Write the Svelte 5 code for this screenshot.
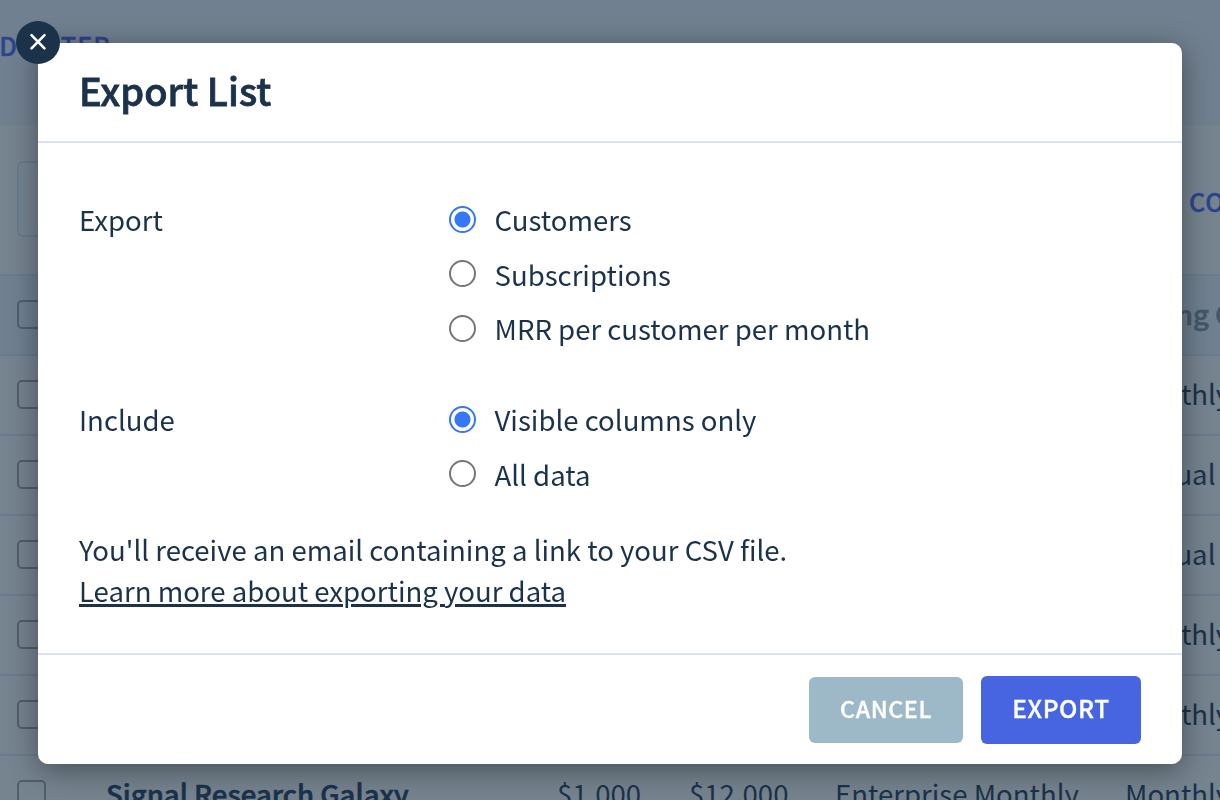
<script lang="ts">
  type Option = { value: string; label: string };

  const exportOptions: Option[] = [
    { value: 'customers', label: 'Customers' },
    { value: 'subscriptions', label: 'Subscriptions' },
    { value: 'mrr', label: 'MRR per customer per month' },
  ];

  const includeOptions: Option[] = [
    { value: 'visible', label: 'Visible columns only' },
    { value: 'all', label: 'All data' },
  ];

  const rows = [
    { billing: 'Monthly' },
    { billing: 'Annual' },
    { billing: 'Annual' },
    { billing: 'Monthly' },
    { billing: 'Monthly' },
    { name: 'Signal Research Galaxy', mrr: '$1,000', arr: '$12,000', plan: 'Enterprise Monthly', billing: 'Monthly' },
  ];

  let exportType = $state('customers');
  let include = $state('visible');
  let open = $state(true);

  function close() {
    open = false;
  }
</script>

<div class="page">
  <div class="page-header"><span class="filter-link">ADD FILTER</span></div>
  <div class="toolbar">
    <div class="search"></div>
    <span class="columns-link">COLUMNS</span>
  </div>
  <div class="row row-head">
    <span class="checkbox"></span>
    <span></span>
    <span></span>
    <span></span>
    <span></span>
    <span class="billing">Billing Cycle</span>
  </div>
  {#each rows as row}
    <div class="row">
      <span class="checkbox"></span>
      <span class="name">{row.name ?? ''}</span>
      <span>{row.mrr ?? ''}</span>
      <span>{row.arr ?? ''}</span>
      <span>{row.plan ?? ''}</span>
      <span class="billing">{row.billing}</span>
    </div>
  {/each}
</div>

{#if open}
  <div class="backdrop">
    <div class="modal" role="dialog" aria-modal="true" aria-labelledby="export-title">
      <button class="close" aria-label="Close" onclick={close}>
        <svg width="44" height="44" viewBox="0 0 44 44" fill="none" stroke="#fff" stroke-width="2.6" stroke-linecap="round">
          <path d="M15.5 14.2 28.5 27.4M28.5 14.2 15.5 27.4" />
        </svg>
      </button>

      <header class="modal-header">
        <h1 id="export-title">Export List</h1>
      </header>

      <div class="modal-body">
        <div class="field">
          <div class="field-label">Export</div>
          <div class="options">
            {#each exportOptions as option}
              <label class="option">
                <input type="radio" name="export" value={option.value} bind:group={exportType} />
                <span>{option.label}</span>
              </label>
            {/each}
          </div>
        </div>

        <div class="field">
          <div class="field-label">Include</div>
          <div class="options">
            {#each includeOptions as option}
              <label class="option">
                <input type="radio" name="include" value={option.value} bind:group={include} />
                <span>{option.label}</span>
              </label>
            {/each}
          </div>
        </div>

        <p class="note">
          You'll receive an email containing a link to your CSV file.<br />
          <a href="#learn">Learn more about exporting your data</a>
        </p>
      </div>

      <footer class="modal-footer">
        <button class="btn btn-cancel" onclick={close}>CANCEL</button>
        <button class="btn btn-export" onclick={close}>EXPORT</button>
      </footer>
    </div>
  </div>
{/if}

<style>
  :global(body) {
    overflow: hidden;
    color: #1b324b;
    font-family: 'Source Sans Pro', 'Noto Sans CJK SC', sans-serif;
    font-size: 27.57px;
  }

  .page {
    height: 800px;
    overflow: hidden;
    background: #768490;
    white-space: nowrap;
  }

  .page-header {
    box-sizing: border-box;
    height: 125px;
    padding-top: 25px;
    background: #718090;
    line-height: 40px;
  }

  .filter-link {
    display: block;
    width: 111px;
    direction: rtl;
    color: #2c448e;
    font-size: 25.2px;
    font-weight: 500;
    letter-spacing: 1.1px;
    -webkit-text-stroke: 0.4px;
  }

  .toolbar {
    box-sizing: border-box;
    display: flex;
    justify-content: space-between;
    height: 151px;
    padding: 36px 0 0 17px;
    border-bottom: 2px solid #697b8d;
  }

  .search {
    box-sizing: border-box;
    width: 600px;
    height: 76px;
    border: 2px solid #697b8d;
    border-radius: 6px;
  }

  .columns-link {
    width: 31px;
    color: #2c448e;
    font-size: 25px;
    font-weight: 500;
    letter-spacing: 1px;
    line-height: 81px;
    -webkit-text-stroke: 0.4px;
  }

  .row {
    box-sizing: border-box;
    display: grid;
    grid-template-columns: 89px 451px 132px 146px 290px 200px;
    align-items: center;
    height: 80px;
    padding-left: 17px;
    border-bottom: 2px solid #697b8d;
    line-height: 74px;
  }

  .row > span:not(.checkbox) {
    height: 78px;
  }

  .row-head {
    background: #708090;
    color: #43586c;
    font-weight: 500;
    -webkit-text-stroke: 0.6px;
  }

  .checkbox {
    box-sizing: border-box;
    width: 29px;
    height: 29px;
    margin-top: -2px;
    border: 2px solid #505f6d;
    border-radius: 5px;
  }

  .name {
    font-weight: 500;
    -webkit-text-stroke: 0.6px;
  }

  .backdrop {
    position: fixed;
    inset: 0;
    padding: 43px 38px 36px;
  }

  .modal {
    position: relative;
    display: flex;
    flex-direction: column;
    height: 721px;
    border-radius: 10px;
    background: #fff;
    box-shadow: 0 6px 30px rgba(0, 0, 0, 0.42);
  }

  .close {
    position: absolute;
    top: -22px;
    left: -22px;
    width: 44px;
    height: 43px;
    padding: 0;
    border: 0;
    border-radius: 50%;
    background: #1b324b;
  }

  .close svg {
    display: block;
  }

  .modal-header {
    box-sizing: border-box;
    height: 100px;
    padding: 17px 41px 0;
    border-bottom: 2px solid #dae3eb;
  }

  h1 {
    margin: 0;
    font-size: 38px;
    font-weight: 500;
    line-height: 60px;
    -webkit-text-stroke: 0.8px;
  }

  .modal-body {
    flex: 1;
    padding: 56px 41px 0;
  }

  .field {
    display: grid;
    grid-template-columns: 369.5px 1fr;
    margin-bottom: 51px;
    line-height: 40px;
  }

  .field + .field {
    margin-bottom: 35px;
  }

  .options {
    display: flex;
    flex-direction: column;
    gap: 14.5px;
  }

  .option {
    display: flex;
    align-items: center;
    gap: 19px;
  }

  .option input {
    appearance: none;
    box-sizing: border-box;
    width: 27px;
    height: 27px;
    margin: 0.5px 0 0;
    border: 2px solid #767676;
    border-radius: 50%;
  }

  .option input:checked {
    border-color: #3478f6;
    background: radial-gradient(circle, #3478f6 7.6px, transparent 8.4px);
  }

  .note {
    margin: 0;
    line-height: 41px;
  }

  .note a {
    color: inherit;
    text-decoration-thickness: 3px;
    text-underline-offset: 2px;
  }

  .modal-footer {
    box-sizing: border-box;
    display: flex;
    align-items: center;
    justify-content: flex-end;
    gap: 18px;
    height: 111px;
    padding: 0 41px;
    border-top: 2px solid #dae3eb;
  }

  .btn {
    padding: 0 0 4px;
    border: 0;
    border-radius: 6px;
    color: #fff;
    font-family: inherit;
    font-weight: 500;
    letter-spacing: 0.6px;
    -webkit-text-stroke: 0.35px;
  }

  .btn-cancel {
    width: 154px;
    height: 66px;
    background: #9db8c7;
    font-size: 23.2px;
  }

  .btn-export {
    width: 160px;
    height: 68px;
    background: #4764e1;
    font-size: 24.4px;
  }
</style>
